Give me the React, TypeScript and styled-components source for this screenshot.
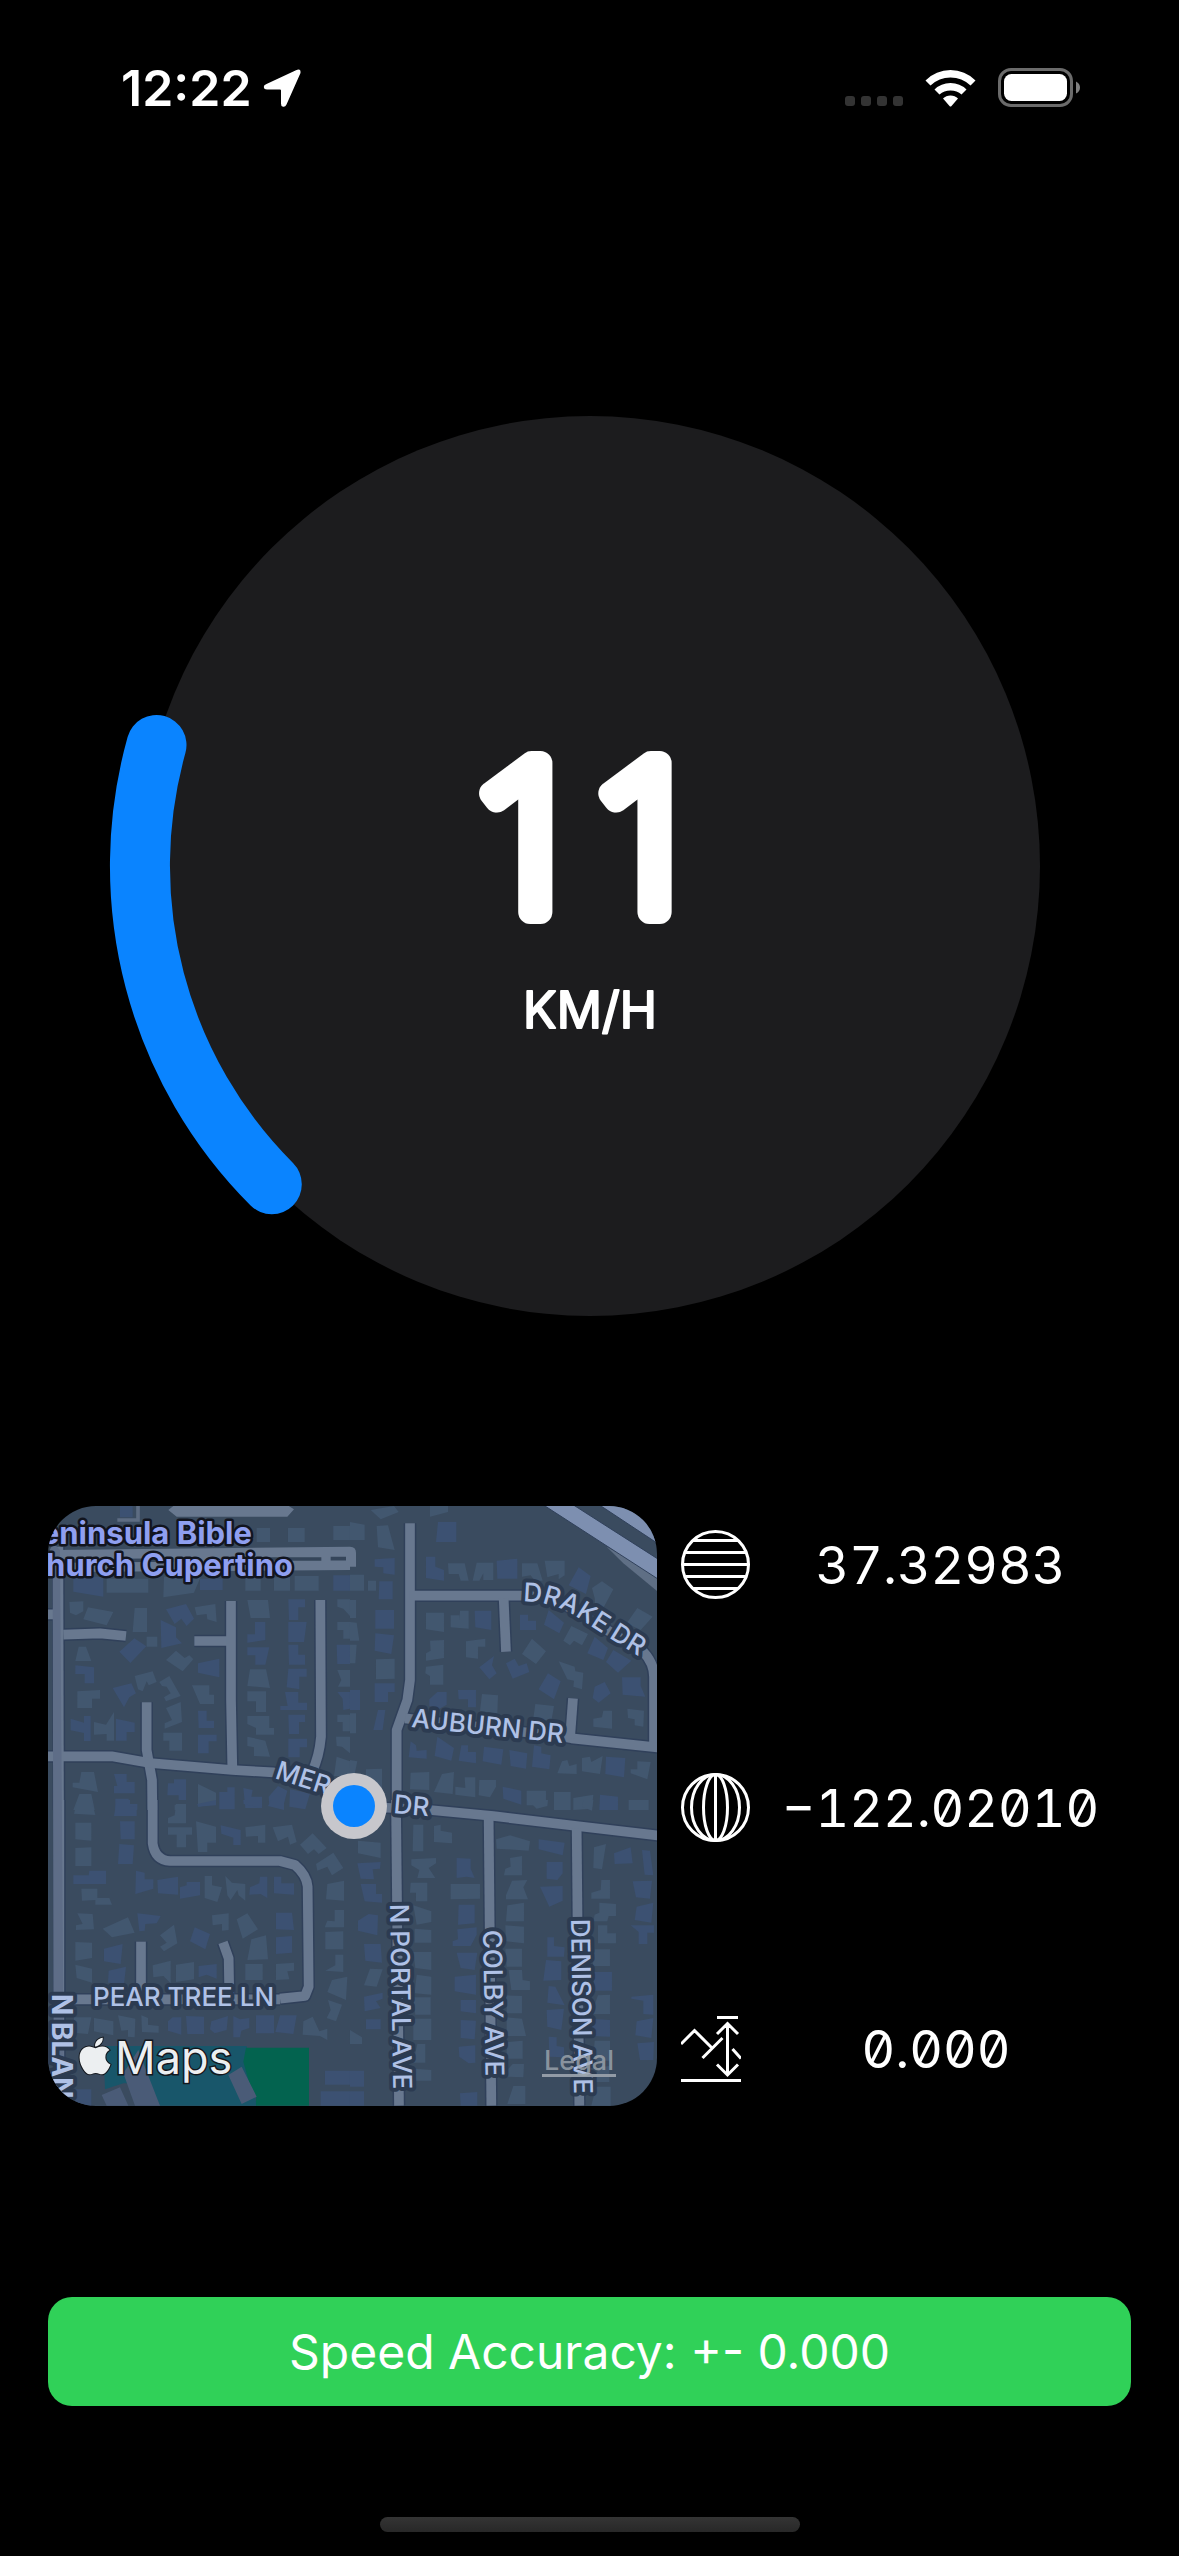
import React from "react";
import styled, { createGlobalStyle } from "styled-components";
import { FaApple } from "react-icons/fa";

const GlobalStyle = createGlobalStyle`
  * { box-sizing: border-box; }
  body { margin: 0; background: #000; color: #fff; font-family: Inter, "Liberation Sans", sans-serif; }
`;

const Screen = styled.div`
  min-height: 100vh;
  display: flex;
  flex-direction: column;
`;

/* ---------- status bar ---------- */

const StatusBar = styled.header`
  height: 177px;
  padding: 0 98px 2px 121px;
  display: flex;
  align-items: center;
  justify-content: space-between;
`;

const StatusGroup = styled.div<{ $gap: number }>`
  display: flex;
  align-items: center;
  gap: ${(p) => p.$gap}px;
`;

const Clock = styled.time`
  font-size: 50px;
  line-height: 60px;
  font-weight: 600;
`;

const CellDots = styled.div`
  display: flex;
  align-items: flex-end;
  gap: 6px;
  height: 36px;
`;

const CellDot = styled.span`
  width: 10px;
  height: 10px;
  border-radius: 3px;
  background: #333;
`;

/* ---------- main ---------- */

const Main = styled.main`
  flex: 1;
  padding: 48px;
  display: flex;
  flex-direction: column;
  justify-content: space-between;

  &::before { content: ""; }
`;

const Gauge = styled.svg`
  display: block;
  width: 100%;
  max-width: 900px;
  margin: 0 auto;
  overflow: visible;

  text {
    fill: #fff;
    stroke: #fff;
    stroke-linejoin: round;
    stroke-linecap: round;
    text-anchor: middle;
  }
`;

const SpeedValue = styled.text`
  font-family: "Open Sans", Roboto, sans-serif;
  font-size: 209px;
  font-weight: 300;
  stroke-width: 24px;
`;

const SpeedUnit = styled.text`
  font-family: Inter, "Liberation Sans", sans-serif;
  font-size: 50px;
  font-weight: 400;
  stroke-width: 2px;
`;

const Location = styled.section`
  display: grid;
  grid-template-columns: 609fr 450fr;
  gap: 24px;
  height: 600px;
`;

const MapCard = styled.div`
  position: relative;
  overflow: hidden;
  border-radius: 48px;
  background: #3a4b5f;
`;

const MapCanvas = styled.svg`
  display: block;
  width: 100%;
  height: 100%;
`;

const StreetLabel = styled.text<{ $major?: boolean }>`
  font-family: Inter, "Liberation Sans", sans-serif;
  font-size: ${(p) => (p.$major ? 28 : 26)}px;
  font-weight: ${(p) => (p.$major ? 700 : 500)};
  fill: #afc1e6;
  stroke: #2c3b51;
  stroke-width: 8px;
  stroke-linejoin: round;
  paint-order: stroke;
`;

const PlaceLabel = styled.text`
  font-family: Inter, "Liberation Sans", sans-serif;
  font-size: 31px;
  font-weight: 700;
  text-anchor: end;
  fill: #8f9ff0;
  stroke: #12151f;
  stroke-width: 5px;
  stroke-linejoin: round;
  paint-order: stroke;
`;

const MapsBrand = styled.div`
  position: absolute;
  left: 28px;
  bottom: 18px;
  display: flex;
  align-items: center;
  gap: 1px;
  font-size: 45px;
  line-height: 60px;
  font-weight: 400;
  color: #eceff1;
  -webkit-text-stroke: 3px #14181e;
  paint-order: stroke;

  svg {
    width: 38px;
    height: 42px;
    margin-bottom: 4px;
    stroke: #14181e;
    stroke-width: 24px;
    paint-order: stroke;
  }
`;

const LegalLink = styled.a`
  position: absolute;
  right: 41px;
  bottom: 29px;
  padding: 0 2px;
  border-bottom: 3px solid #929ba6;
  font-size: 27px;
  line-height: 26px;
  font-weight: 500;
  color: #a0a8b0cc;
  text-decoration: none;
`;

const Readings = styled.dl`
  margin: 0;
  padding: 24px 0;
  display: flex;
  flex-direction: column;
  justify-content: space-between;
`;

const Reading = styled.div`
  display: flex;
  align-items: center;
`;

const ReadingIcon = styled.dt`
  display: flex;

  svg {
    display: block;
    fill: none;
    stroke: #fff;
    stroke-width: 3;
  }
`;

const ReadingValue = styled.dd`
  flex: 1;
  margin: 0;
  padding-top: 2px;
  text-align: center;
  font-size: 52px;
  line-height: 60px;
  font-weight: 400;
  font-feature-settings: "tnum", "zero";
`;

const Accuracy = styled.div`
  padding: 24px;
  border-radius: 24px;
  background: #30d158;
  text-align: center;
  font-size: 48px;
  line-height: 61px;
`;

const HomeArea = styled.footer`
  height: 102px;
  padding-bottom: 24px;
  display: flex;
  align-items: flex-end;
  justify-content: center;
`;

const HomeIndicator = styled.div`
  width: 420px;
  height: 15px;
  border-radius: 8px;
  background: linear-gradient(#343434, #282828);
`;

/* ---------- map data: four tiles drawn at three units per pixel ---------- */

type Tile = {
  shift: string;
  blue: string;
  slate: string;
  roads: string[];
};

const tiles: Tile[] = [
  {
    shift: "translate(-24 -18)",
    blue:
      "M240 18h38v34h-38z M100 230h90v60l-90-15z M378 328l60-16 24 44-22 22-16-22-20 16z M238 455l45-40 36 24-48 50z M362 360l46 22v30l18 18-62 14z M474 490l64-14v56l-64-14z M106 496l56 6v48h-28v-28h-28z M218 564l56-14 14 30-20 12-16 30z M92 656l40 12v-20h20v75h-20v-24l-40-8z M228 656l56 12v28h-24v26h-32z M474 632h26v30h22v22h-46z M474 704h56v20h-24v36h-32z M645 366h31v54l-54 8v-25h23z M622 442h66l-12 52h-30v-28h-24z M745 298h50v24h-20v38h-28z M745 366h55l-8 60h-47z M745 434h30v30h20v30h-48z M745 506h55v24h-22v38l-38-6z M735 576h40v32h26v22h-80v-12h22z M745 644h50v22h-18v36h-30z M745 716h56v26h-22v30h-34z M222 822h38v24h24v34h-62v-22h10z M226 896h40v16h26v18h-66z M384 850h18v-12h36v62h-22v-14h-34z M538 876h24v-14h22v66h-46z M686 890l28-32 28 14-14 54-40-8z M890 434h40v58h-38z M880 226h50v46h-50z M480 236h68v34h-68z M610 864l28 6-4 20h32v34h-50z M750 868l60 12-14 48-48-8z M892 576h38v50l-20 4-2-34z",
    slate:
      "M200 236h125v42H200z M372 230h110l-20 48-92 14z M616 226h46v46h-46z M702 232h48v40h-48z M764 228h72v44h-72z M88 306l42-2v30l-22 12-18-8z M144 322l76 14-20 40-70-18z M284 324h37v72h-43z M464 322l62-10 4 54-28-8-2-16-30 4z M320 410h32v30h-32z M378 480l30-28 26 22 14-8 12 12-32 36z M116 440h22l16 43h-48z M112 574l68-4v26h-24v28h-44z M284 528l54-14 12 32-24 10-6-12-12 30-14-6z M358 546l30-18 34 60-44 16-6-12 20-12-12-20-14-2z M162 666l36 8 24-38v86h-22v-20l-38 2z M378 624l44-18 4 60-52 20v-16l22-10z M456 556h52v28h14v28h-42z M370 698h56v54h-38v-30h-18z M622 300h62l6 54h-58z M630 508h48l12 56-68-6z M622 574h56v62h-30v-32h-26z M622 648h66v36h14v20h-54v-20l-26-12z M622 710l54 12 14 48-48-2v-26l-20-4z M124 816h38l12 60-76-14v-14h20z M118 882h36l10 48h-64z M474 852l54 26v34l-54 8z M404 914h32v16h-32z M892 298h38v50l-20-22-18-6z M892 366h38v50h-20v-26h-18z M892 644h38v50h-22v-28h-16z M888 710h42v50l-24-20-16-2z M890 770l40 14v44h-48z M650 84h40v42h-40z M744 84h50v42h-50z M880 78h50v42h-50z M892 510h38v50h-36l10-20z",
    roads: [
      "M55 140L57 930",
      "M24 343H42",
      "M70 404L180 400L258 408",
      "M463 423H562",
      "M573 303V600L577 806",
      "M841 300L843 710Q838 770 815 818",
      "M320 607V750L336 840L337 930",
      "M24 769H215L330 789L577 810L700 817L860 870",
    ],
  },
  {
    shift: "translate(906 -18)",
    blue:
      "M264 66h55v60h-61z M228 170h28v30l26 10v32l-54-8z M440 182l62-6v60h-60z M74 178l60-4v50l-34-4v-18l-26-2z M88 244h40v54h-42z M76 400l56 6-8 56-50-10z M76 330h56v56h-56z M74 550h60v26h-20v30h-40z M84 630h22l-8 60h-28z M686 202l36 26-14 54-52-26z M374 332h50v58l-48-8z M510 344h24v18h24v28h-48z M596 330l46 38-14 32-46-26z M388 502l44-34-6 28 14 24-22 18z M468 490l26-14 12 22 24-8 8 26-50 20z M594 520l38 24-20 54-46-30z M734 410l40 34-14 36-48-20z M790 450l54 32-40 36-36-32z M816 532h56v26l14 32-68-6z M734 560l30-14 18 34-36 28-18-14z M324 570h54v52h-24v-24h-28z M262 576h28v38l-24 14-28-10v-20z M182 724l16 12 2 16 30-2v26l-54-4z M262 710l50 34-8 38-50-14z M334 736h20v20h24v34l-52-8z M402 740l58 8-6 46-56-10z M478 750l54 10-4 46-46-8z M552 736l22 4v20l28 6-4 42-52-8z M768 770l58 4-4 58-56-10z M0 570h30v60H0z M458 860l56 12v42l-54-18z M750 884l54 6v40h-56z",
    slate:
      "M62 30l70-12 14 18-54 22z M240 18h54v18l-54 14z M0 66l44 8v46H0z M80 78l34-2 20 74-50-8z M0 224h42v48H0z M54 242h24v30h-24z M294 190h50l12 52h-24l-6-20h-30z M380 188h50v52h-30v-20l-12 22h-20z M516 190h46l16 52h-24l-12-16-26 4z M584 182h60v44l-18 12v-16l-34 10z M726 264l30-20 34 24-28 52h-26l-2-26z M862 324l46 26-36 40-42-20z M228 338h54v58l-54-8z M302 346h26v16l2-30h26v54l-54-4z M348 424l58-8v24h-22v36l-36-4z M240 422l42-2v54l-54 8v-22l14-8z M228 500l52-6v60h-40v-26l-14-8z M546 416l42 38-30 38-42-30z M664 378l50 24-18 34-24-14-12 14-20-14z M626 484l48 16 2 14 24 4-4 50-26-8 2-18-20-4z M78 478l56-2v60l-56 2z M396 582l48 4-2 56-52-10z M556 612l56 6-8 46-54-10z M760 632h26v54l-56-6v-24l26-4z M832 626l50 6-2 48-26-4v-18l-20-4z M636 784l16-4 6 18 22-6v30l-58-2z M696 774l24-4 4 16 34-18-8 54-54-8z M862 784l40 2-10 52-50-18v-12h20z M182 818l56-2v54l-58-2z M276 822l36-6-4 66-56-6z M344 832h32v60l-60-8v-24l30 4z M388 840h50v20l-18 32-34-6z M530 872h58v44h-58z M612 876h50v54h-50z M670 894l60-10-4 42-56 4z M0 366l20 2 8 54H0z M0 300h18v54H0z M0 434h20l-4 56H0z M0 640h18v60H0z M0 780l22 4-8 38H0z M48 808l48-2v60l-50-4z M836 900h60v30h-60z",
    roads: [
      "M180 70V540L172 600L140 690V930",
      "M180 287H518Q610 290 690 340T880 455Q912 490 912 530V750",
      "M461 295L468 455",
      "M165 655L640 710L665 715L930 743",
      "M669 595L660 715",
    ],
  },
  {
    shift: "translate(-24 882)",
    blue:
      "M230 0h40v20h20v28h-68z M240 64h44v54h-42z M238 132l44 4-4 56h-44z M148 212h50v40h-98v-26h46z M288 212l26 6v20h26v28l-54 16z M192 446l56-14-6 60-50-8z M206 512l52-12-6 52-48-4z M352 240l62-10v54l-60-4z M420 262l20-6v-10h40v40l-60 10z M542 76l60 14v45h-22v-22l-36-12z M292 340l70 8-12 22-34 2-2 20-16 2z M630 262l28-12 2-20h22v64l-20-12-34 2z M702 230h22v20h38v34l-60-4z M708 338h48l6 52-54-2z M708 412l48-4v50l-48 4z M464 382l46 20-14 46-46-24z M476 498l54-6v44l-30-12-24 8z M384 664l14-12h26v52l-40-12z M438 648l54 2v52h-50z M514 664l50-16-4 42-36 10-14-12z M580 648l20 10 28-4v30l-24 8-4 20h-20z M648 646h54v54h-54z M720 646h50l-10 56-54-6z M104 868h50v49h-50z M842 874h88v43h-88z M855 812h75v42h-75z M472 12l56-12v16l-54 4z M610 0h55v24l-54-12z M694 0h38v30l-48-12z",
    slate:
      "M112 0h42l12 45-64-4z M106 68h48v54l-48-4z M106 144l48-2v56h-48z M124 266h48v28h36l8 20h-50v-14l-40 2z M112 340l46 2 4 46-54 2v-14l20-4z M188 386l76-34 20 46-68 14z M106 426l50 2v46l-50 8z M106 494l50 12v42l-46-14z M408 12h30v58h-54v-16l20-8z M384 82h72v22h-18v38h-28v-38h-26z M468 64l60 16v48h-26v28h-28z M616 82l60-8v54h-22v-20l-36 2z M698 82l58-8 14 52-20 8-6-24-30 14z M780 134l38-34 42 44-24 18-14-14-18 14z M828 192l52-34 30 46-34 22-14-26-30 12z M360 406l42-32 10 56-40 24-12-14 20-12z M338 496l54-14v68l-22-22-30 4z M408 494l54-8v52l-54 8z M590 358l32-18 32 48-46 28z M634 418l44-12 6 72-62 2z M516 346l50-6v50l-20 2v-20l-28 4z M494 228h22v28l30 6-14 44-38-12z M556 228l20 20 40 4v50l-20-16-4-16-20 30-10-14z M102 652h52l-10 50-44-4z M162 654l58 10v42l-58-12z M234 646l52 10-2 56-20-2v-20l-20 2z M304 646l20 8v20l32 4v20l-50-2z M790 664l28-14 20 44 24-8v34l-22-12-52-4z M856 396l54-2v54h-54z M884 330h28v52h-58l8-20 22 2z M862 252l50-10v60l-54-4z M886 464h24v52l-54-4 30-16z M876 540l46-10-4 70-56-24z M864 600l42 14-18 50-28-10 12-24z M708 492l54-4v24l-20 2 6 24-40 2z M616 492h52v48h-52z",
    roads: [
      "M58 0V917",
      "M338 0V130Q345 180 390 183H720L765 195Q800 225 803 260L806 560L795 588L720 596",
      "M303 425V590",
      "M549 427L566 475L568 590",
      "M75 598H720",
    ],
  },
  {
    shift: "translate(906 882)",
    blue:
      "M22 190l70-4-2 20-22 2 4 30-40-2z M32 252h46v30h18v26l-52-4z M24 362l32-20 28 4-2 60-58-14z M42 432h50l4 56-50-6z M42 590l56-12v18l-20 8 14 20-48 10z M48 658h44v30h-44z M320 174l42 2v30l12 28-24-4-30 4z M326 314h48v56l-50 4z M322 388l58-6v22l-18 34h-54v-14l16-6z M320 458h62l-8 52-42-6z M314 530l64-6v60l-64-10z M332 600h46v40l-46-6z M332 660l46 2-4 56-42-4z M326 740l50-4v52l-20 2-28-20z M330 880l52-4v41h-50z M566 118l78 10-6 38-72-18z M590 186h48v34l-16 20-32-4z M570 260l68-2v44l-40 18z M592 412h20v26l32 4-2 28h-50z M588 480l46 4v56l-54 2z M596 558l20 2 28 56-52-8z M590 630l52-4-8 64-42-10z M596 710l24 2v26l22 4v30l-44-2z M792 160l50-18 6 48-54 2z M734 516h52v56h-56z M722 656l58 4v50l-56-2z M860 664l50-10-6 60-48-8z M844 590l66-6v60l-30-2v-40l-36-6z M848 244l58-2-6 54-42-4z M860 320l50-12-6 60-50-8z M842 376h70v22h-20v34h-26v-36z M0 812h42v48H0z M0 874h42v43H0z M876 150l24 2 10 74-26-2z M862 730l50-4-2 54h-40z",
    slate:
      "M190 74h30v80h-32z M252 78l20-4v18l34 6v32l-54-4z M184 178l74-4v16l-22 14 20 30h-54l6-24-24-14z M182 248h50v56h-34v-26h-18z M190 316l54 18v32l-44 8z M194 386l50 4v38h-50z M190 456h54v54l-48-6z M200 524l44 6v54l-50-4z M190 592h52v52h-46z M190 656h54v64h-54z M202 732h24v56h-36z M194 806l50 4v32h-52z M438 118l42-12 60 18-4 28-96-6z M480 174l36-6v58h-54l4-20 16-6z M486 242l46-2-12 22 14 36h-66v-12z M472 316l50-8v56h-54z M466 376l56 4v50l-54-6z M466 446h50v54h-46z M476 510h40l2 30 22 4v26h-56z M468 586l48 2v52h-46v-18z M470 652l46 4 12 52h-58z M470 726l48-4v54h-48z M488 792h34l-2 40-50-2v-18z M490 858h36v54h-54z M732 142l36-10-12 76-26-4z M754 240h26v56h-56v-18l28-8z M748 308l50 4v36h-22l-4 16h-42l4-20 14-6z M744 376h28v24h26v30h-54z M734 448h46v50h-52z M744 586l36-2v58h-56z M734 722h46v60h-50z M748 802l30-4v48h-50z M738 860h44v57h-58z M24 122l68 6v46l-68-14z M60 506l38 2-18 52-38-4z M0 690l36 22v20H0z M366 252h24v44l-88 2v-46z M700 0h30l-4 32-30-12z M534 0h60l-2 18-32 8z",
    roads: [
      "M11 18L240 30L430 48L680 78L930 107",
      "M138 0L147 917",
      "M416 55L424 917",
      "M680 85L688 917",
    ],
  },
];

function StreetMap() {
  return (
    <MapCanvas viewBox="0 0 609 600" preserveAspectRatio="xMidYMid slice" role="img" aria-label="Map">
      <defs>
        <path id="drake" d="M475 96Q500 94 529 111L546 122L563 133L600 156" />
      </defs>
      <g transform="scale(0.33333)">
        <g transform="translate(-24 882)">
          <path fill="#18566a" d="M190 738H620L650 917H360L330 850H250L195 868Z" />
          <path fill="#03634f" d="M618 743H807V917H648V890L628 850L610 785Z" />
        </g>
        {tiles.map((t) => (
          <g key={t.shift} transform={t.shift}>
            <path d={t.blue} fill="#3c5172" />
            <path d={t.slate} fill="#42576f" />
          </g>
        ))}
        <g transform="translate(-24 882)" fill="#4a5b77">
          <path d="M565 825L605 800L650 890L605 912Z M250 820L295 750L360 917H285Z M185 885L240 862L265 917H200Z" />
        </g>
        {[
          { color: "#30405a", width: 38 },
          { color: "#68788f", width: 29 },
        ].map((pass) => (
          <g key={pass.width} fill="none" stroke={pass.color} strokeWidth={pass.width} strokeLinejoin="round">
            {tiles.map((t) => (
              <g key={t.shift} transform={t.shift}>
                {t.roads.map((d) => (
                  <path key={d} d={d} />
                ))}
              </g>
            ))}
          </g>
        ))}
        <g transform="translate(-24 -18)">
          <path fill="#68788f" d="M40 150L930 140Q948 140 948 158V200H930V210L40 216Z M385 30L405 14H740L762 28L742 50H410Z" />
          <path fill="none" stroke="#35455a" strokeWidth="11" d="M72 183L400 180M580 177H844M872 176H918" />
          <path fill="none" stroke="#5d6c82" strokeWidth="11" d="M232 60H294V18" />
          <path fill="#5e6d87" d="M24 160L40 130L60 150L72 1818H41L38 200Z" />
        </g>
        <g transform="translate(906 -18)">
          <path fill="#5f6f85" d="M770 140L930 228V280L820 190Z" />
          <path
            fill="#7d8fb0"
            stroke="#30405a"
            strokeWidth="3"
            d="M582 16H672L930 181V241Z M750 16H930V135Z"
          />
        </g>
      </g>

      <PlaceLabel x="204" y="38">Peninsula Bible</PlaceLabel>
      <PlaceLabel x="245" y="70">Church Cupertino</PlaceLabel>
      <StreetLabel>
        <textPath href="#drake">DRAKE DR</textPath>
      </StreetLabel>
      <StreetLabel transform="translate(363 221) rotate(6)">AUBURN DR</StreetLabel>
      <StreetLabel transform="translate(226 272) rotate(18)">MER</StreetLabel>
      <StreetLabel transform="translate(345 307) rotate(5)">DR</StreetLabel>
      <StreetLabel x="45" y="500">PEAR TREE LN</StreetLabel>
      <StreetLabel transform="translate(342 398) rotate(89)">N PORTAL AVE</StreetLabel>
      <StreetLabel transform="translate(435 424) rotate(89)">COLBY AVE</StreetLabel>
      <StreetLabel transform="translate(523 413) rotate(89)">DENISON AVE</StreetLabel>
      <StreetLabel $major transform="translate(4 488) rotate(90)">N BLAN</StreetLabel>

      <circle cx="306" cy="300" r="33" fill="#c7c7cc" />
      <circle cx="306" cy="300" r="21" fill="#0a84ff" />
    </MapCanvas>
  );
}

const LatitudeIcon = () => (
  <svg width="69" height="69" viewBox="0 0 69 69" aria-label="Latitude" role="img">
    <circle cx="34.500" cy="34.500" r="33" />
    <path d="M12 10.500H57M5 22.500H64M2 34.500H67M5 46.500H64M12 58.500H57" />
  </svg>
);

const LongitudeIcon = () => (
  <svg width="69" height="69" viewBox="0 0 69 69" aria-label="Longitude" role="img">
    <circle cx="34.500" cy="34.500" r="33" />
    <ellipse cx="34.500" cy="34.500" rx="24" ry="33" />
    <ellipse cx="34.500" cy="34.500" rx="12" ry="33" />
    <path d="M34.500 2V67" />
  </svg>
);

const AltitudeIcon = () => (
  <svg width="60" height="66" viewBox="0 0 60 66" aria-label="Altitude" role="img">
    <path d="M36 1.500H57M0 64.500H60M46.500 8V58M36 18L46.500 7.500L57 18M36 48.500L46.500 59L57 48.500M0 28L13.500 14.500L31 32M21.500 42L41.500 22M51.500 33L60 42.500" />
  </svg>
);

const readings = [
  { icon: <LatitudeIcon />, value: "37.32983" },
  { icon: <LongitudeIcon />, value: "−122.02010" },
  { icon: <AltitudeIcon />, value: "0.000" },
];

export default function App() {
  return (
    <Screen>
      <GlobalStyle />
      <StatusBar>
        <StatusGroup $gap={11}>
          <Clock>12:22</Clock>
          <svg width="40" height="40" viewBox="0 0 40 40" aria-hidden="true">
            <path
              d="M3.500 16L33 2.200Q38 0 37.500 5L23.500 36.500Q22 39.500 19.500 38.500Q18 38 18 35.500V22.500Q18 21.500 17 21.500H4Q1 21.500 .8 19Q.6 17.200 3.500 16Z"
              fill="#fff"
            />
          </svg>
        </StatusGroup>
        <StatusGroup $gap={22}>
          <CellDots>
            {[0, 1, 2, 3].map((i) => (
              <CellDot key={i} />
            ))}
          </CellDots>
          <svg width="51" height="38" viewBox="0 0 51 38" aria-hidden="true" fill="#fff">
            <path d="M.5 11.500Q11 1 25.500 1T50.500 11.500L45.500 16.500Q37 8.500 25.500 8.500T5.500 16.500Z" />
            <path d="M9.500 20.500Q16 14 25.500 14T41.500 20.500L36.500 25.500Q32 21.500 25.500 21.500T14.500 25.500Z" />
            <path d="M18 29.500Q21 26.500 25.500 26.500T33 29.500L26.500 37Q25.500 38 24.500 37Z" />
          </svg>
          <svg width="83" height="39" viewBox="0 0 83 39" aria-hidden="true">
            <rect x="1.500" y="1.500" width="72" height="36" rx="11.500" fill="none" stroke="#6b6b6b" strokeWidth="3" />
            <rect x="6" y="6" width="63" height="27" rx="7.500" fill="#fff" />
            <path d="M78 13.500Q82 15.500 82 19.500T78 25.500Z" fill="#808080" />
          </svg>
        </StatusGroup>
      </StatusBar>

      <Main>
        <Gauge viewBox="0 0 900 900">
          <circle cx="450" cy="450" r="450" fill="#1c1c1e" />
          <path
            d="M131.800 768.200A450 450 0 0 1 16.500 329"
            fill="none"
            stroke="#0a84ff"
            strokeWidth="60"
            strokeLinecap="round"
          />
          <SpeedValue x="450" y="496">11</SpeedValue>
          <SpeedUnit x="450" y="612">KM/H</SpeedUnit>
        </Gauge>

        <Location>
          <MapCard>
            <StreetMap />
            <MapsBrand>
              <FaApple aria-hidden="true" />
              Maps
            </MapsBrand>
            <LegalLink href="#legal">Legal</LegalLink>
          </MapCard>
          <Readings>
            {readings.map((r) => (
              <Reading key={r.value}>
                <ReadingIcon>{r.icon}</ReadingIcon>
                <ReadingValue>{r.value}</ReadingValue>
              </Reading>
            ))}
          </Readings>
        </Location>

        <Accuracy>Speed Accuracy: +- 0.000</Accuracy>
      </Main>

      <HomeArea>
        <HomeIndicator />
      </HomeArea>
    </Screen>
  );
}
